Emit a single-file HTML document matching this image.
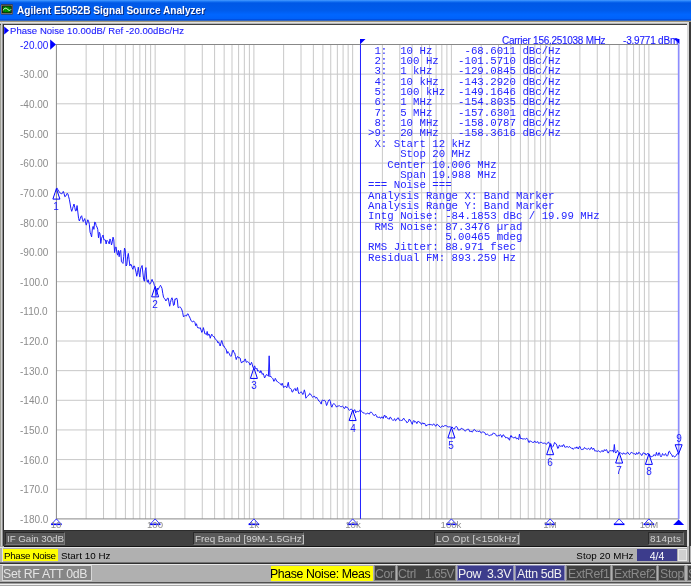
<!DOCTYPE html>
<html><head><meta charset="utf-8"><style>
*{margin:0;padding:0}
html,body{width:691px;height:586px;overflow:hidden;background:#a0a098}
body{position:relative;font-family:"Liberation Sans",sans-serif}
.a{position:absolute;white-space:pre;will-change:transform}
.mono{font-family:"Liberation Mono",monospace;font-size:10.72px;line-height:10px;color:#2424ff}
</style></head><body>
<svg class="a" style="left:0;top:0" width="691" height="586" viewBox="0 0 691 586">
<defs>
<linearGradient id="tb" x1="0" y1="0" x2="0" y2="21" gradientUnits="userSpaceOnUse">
<stop offset="0" stop-color="#4a9cff"/>
<stop offset="0.06" stop-color="#1f7cf8"/>
<stop offset="0.14" stop-color="#0058e6"/>
<stop offset="0.5" stop-color="#005cec"/>
<stop offset="0.7" stop-color="#0066ff"/>
<stop offset="0.88" stop-color="#0062fa"/>
<stop offset="0.93" stop-color="#0050e0"/>
<stop offset="1" stop-color="#4a70b0"/>
</linearGradient>
</defs>
<rect x="0" y="0" width="691" height="21" fill="url(#tb)"/>
<rect x="0" y="21" width="691" height="1" fill="#a09880"/>
<rect x="0" y="22" width="691" height="1" fill="#e0e0e0"/>
<rect x="0" y="23" width="691" height="1" fill="#b8b8b8"/>
<rect x="0" y="24" width="688" height="1" fill="#404040"/>
<rect x="1" y="22" width="1" height="524" fill="#d0d0d0"/>
<rect x="2" y="24" width="1" height="522" fill="#909090"/>
<rect x="3" y="24" width="1" height="522" fill="#303030"/>
<rect x="4" y="25" width="683" height="505" fill="#ffffff"/>
<rect x="687" y="22" width="2" height="524" fill="#d8d8d8"/>
<rect x="689" y="22" width="2" height="524" fill="#3a3a3a"/>
<!-- icon -->
<rect x="0.9" y="4.3" width="12" height="10.3" rx="1" fill="#1e1a16"/>
<rect x="1.75" y="5.15" width="10.3" height="8.6" fill="none" stroke="#a8a098" stroke-width="0.7"/>
<rect x="2.5" y="5.9" width="8.8" height="7.1" fill="#0c0c0c"/>
<rect x="3.1" y="6.5" width="7.6" height="5.9" fill="#00a000"/>
<path d="M4.5 6.6V12.4M7 6.6V12.4M9.5 6.6V12.4M3 7.2H10.8M3 12.1H10.8" stroke="#003a00" stroke-width="0.6" stroke-dasharray="0.8 0.8"/>
<path d="M3.2 10.3C4.3 7.6 6.8 7.6 8.2 9.9C8.9 10.6 10.2 10.6 11 9.4" fill="none" stroke="#e8ffe0" stroke-width="1"/>
<!-- grid -->
<path d="M86.13 44.50V518.90M103.52 44.50V518.90M115.85 44.50V518.90M125.42 44.50V518.90M133.24 44.50V518.90M139.85 44.50V518.90M145.58 44.50V518.90M150.63 44.50V518.90M155.15 44.50V518.90M184.88 44.50V518.90M202.27 44.50V518.90M214.60 44.50V518.90M224.17 44.50V518.90M231.99 44.50V518.90M238.60 44.50V518.90M244.33 44.50V518.90M249.38 44.50V518.90M253.90 44.50V518.90M283.63 44.50V518.90M301.02 44.50V518.90M313.35 44.50V518.90M322.92 44.50V518.90M330.74 44.50V518.90M337.35 44.50V518.90M343.08 44.50V518.90M348.13 44.50V518.90M352.65 44.50V518.90M382.38 44.50V518.90M399.77 44.50V518.90M412.10 44.50V518.90M421.67 44.50V518.90M429.49 44.50V518.90M436.10 44.50V518.90M441.83 44.50V518.90M446.88 44.50V518.90M451.40 44.50V518.90M481.13 44.50V518.90M498.52 44.50V518.90M510.85 44.50V518.90M520.42 44.50V518.90M528.24 44.50V518.90M534.85 44.50V518.90M540.58 44.50V518.90M545.63 44.50V518.90M550.15 44.50V518.90M579.88 44.50V518.90M597.27 44.50V518.90M609.60 44.50V518.90M619.17 44.50V518.90M626.99 44.50V518.90M633.60 44.50V518.90M639.33 44.50V518.90M644.38 44.50V518.90M648.90 44.50V518.90M56.40 74.15H678.63M56.40 103.80H678.63M56.40 133.45H678.63M56.40 163.10H678.63M56.40 192.75H678.63M56.40 222.40H678.63M56.40 252.05H678.63M56.40 281.70H678.63M56.40 311.35H678.63M56.40 341.00H678.63M56.40 370.65H678.63M56.40 400.30H678.63M56.40 429.95H678.63M56.40 459.60H678.63M56.40 489.25H678.63" stroke="#c8c8c8" stroke-width="1" fill="none"/>
<rect x="56.40" y="44.50" width="622.23" height="474.40" fill="none" stroke="#888888" stroke-width="1"/>
<!-- band marker lines -->
<path d="M360.47 44.50V518.90" stroke="#2020ff" stroke-width="1"/>
<path d="M678.63 43.50V518.90" stroke="#8c8cff" stroke-width="1.6"/>
<path d="M359.97 39H365.47L359.97 44.5Z" fill="#0000ff"/>
<path d="M673.63 38.5L679.43 39V44Z" fill="#0000ff"/>
<!-- trace -->
<path d="M56.40 188.60L57.17 188.17L57.93 189.85L58.70 191.04L59.46 192.19L60.23 193.11L60.99 193.50L61.76 193.88L62.52 192.95L63.29 191.42L64.05 193.40L64.82 196.71L65.58 196.33L66.35 194.80L67.11 193.27L67.88 193.93L68.65 196.80L69.41 199.67L70.18 204.06L70.94 208.65L71.71 211.34L72.47 208.89L73.24 206.44L74.00 204.01L74.77 207.46L75.53 210.90L76.30 210.61L77.06 205.55L77.83 212.05L78.60 218.56L79.36 220.99L80.13 218.85L80.89 216.70L81.66 215.73L82.42 219.30L83.19 221.63L83.95 220.10L84.72 218.56L85.48 221.87L86.25 225.13L87.01 222.45L87.78 219.77L88.54 221.18L89.31 224.24L90.08 232.20L90.84 234.40L91.61 236.96L92.37 228.77L93.14 226.37L93.90 229.39L94.67 222.14L95.43 222.48L96.20 225.67L96.96 227.00L97.73 229.27L98.49 237.77L99.26 232.25L100.02 233.82L100.79 243.49L101.56 238.24L102.32 236.59L103.09 235.06L103.85 239.76L104.62 239.79L105.38 240.03L106.15 244.03L106.91 240.32L107.68 241.14L108.44 241.76L109.21 243.97L109.97 238.94L110.74 240.78L111.50 245.01L112.27 241.88L113.04 237.17L113.80 239.90L114.57 252.59L115.33 247.33L116.10 247.01L116.86 252.72L117.63 255.13L118.39 250.37L119.16 256.72L119.92 251.47L120.69 250.40L121.45 261.76L122.22 262.47L122.99 263.42L123.75 256.43L124.52 248.05L125.28 250.38L126.05 266.00L126.81 265.02L127.58 256.77L128.34 253.38L129.11 259.76L129.87 265.85L130.64 264.11L131.40 264.94L132.17 267.68L132.93 269.32L133.70 266.04L134.47 266.06L135.23 268.76L136.00 272.05L136.76 276.23L137.53 272.69L138.29 267.19L139.06 273.03L139.82 276.92L140.59 269.14L141.35 267.26L142.12 265.49L142.88 272.94L143.65 279.66L144.41 281.24L145.18 270.84L145.95 267.59L146.71 279.46L147.48 282.19L148.24 279.75L149.01 283.51L149.77 283.96L150.54 283.58L151.30 281.29L152.07 279.37L152.83 281.78L153.60 282.16L154.36 285.66L155.13 286.36L155.90 295.74L156.66 294.27L157.43 288.03L158.19 289.58L158.96 287.92L159.72 286.56L160.49 285.29L161.25 286.63L162.02 288.51L162.78 293.38L163.55 297.29L164.31 298.46L165.08 299.10L165.84 300.97L166.61 299.99L167.38 298.25L168.14 298.02L168.91 301.90L169.67 306.24L170.44 302.49L171.20 299.48L171.97 297.78L172.73 300.44L173.50 305.48L174.26 304.90L175.03 298.74L175.79 299.45L176.56 297.96L177.32 299.68L178.09 307.60L178.86 307.60L179.62 306.85L180.39 307.23L181.15 308.23L181.92 309.96L182.68 312.64L183.45 316.81L184.21 315.86L184.98 316.12L185.74 315.48L186.51 316.01L187.27 314.12L188.04 313.78L188.80 315.66L189.57 316.99L190.34 318.74L191.10 320.78L191.87 321.47L192.63 321.99L193.40 321.00L194.16 321.40L194.93 322.56L195.69 325.68L196.46 323.77L197.22 326.65L197.99 328.13L198.75 327.73L199.52 328.13L200.29 327.71L201.05 330.11L201.82 332.39L202.58 331.18L203.35 327.62L204.11 330.45L204.88 333.90L205.64 333.95L206.41 334.70L207.17 331.46L207.94 335.51L208.70 334.09L209.47 334.56L210.23 338.25L211.00 335.97L211.77 334.19L212.53 335.62L213.30 336.58L214.06 336.44L214.83 338.14L215.59 339.27L216.36 340.21L217.12 340.66L217.89 342.84L218.65 341.82L219.42 344.33L220.18 346.03L220.95 343.13L221.71 340.52L222.48 342.74L223.25 346.02L224.01 345.94L224.78 347.82L225.54 348.38L226.31 349.92L227.07 353.46L227.84 351.47L228.60 352.58L229.37 353.80L230.13 355.68L230.90 356.45L231.66 354.80L232.43 351.11L233.20 350.05L233.96 352.59L234.73 352.98L235.49 356.40L236.26 359.57L237.02 357.14L237.79 356.43L238.55 357.95L239.32 357.54L240.08 358.02L240.85 361.34L241.61 363.06L242.38 361.71L243.14 361.56L243.91 361.55L244.68 359.40L245.44 359.13L246.21 362.27L246.97 361.97L247.74 361.58L248.50 362.16L249.27 363.04L250.03 365.13L250.80 363.84L251.56 362.29L252.33 364.87L253.09 367.66L253.86 367.94L254.62 365.82L255.39 367.88L256.16 369.20L256.92 368.28L257.69 371.15L258.45 370.59L259.22 371.57L259.98 372.90L260.75 370.62L261.51 371.98L262.28 374.36L263.04 373.36L263.81 375.28L264.57 377.94L265.34 376.76L266.10 374.89L266.87 374.51L267.64 375.55L268.40 376.20L269.17 355.82L269.93 376.95L270.70 376.13L271.46 377.36L272.23 377.97L272.99 378.76L273.76 381.32L274.52 380.89L275.29 378.33L276.05 379.74L276.82 381.38L277.59 381.58L278.35 382.53L279.12 382.68L279.88 383.65L280.65 384.04L281.41 385.29L282.18 383.18L282.94 385.41L283.71 387.63L284.47 386.59L285.24 386.26L286.00 386.58L286.77 387.86L287.53 385.01L288.30 382.30L289.07 387.50L289.83 388.20L290.60 388.48L291.36 389.39L292.13 392.10L292.89 391.68L293.66 389.61L294.42 389.10L295.19 388.39L295.95 390.88L296.72 389.76L297.48 387.51L298.25 391.87L299.01 393.72L299.78 392.88L300.55 392.37L301.31 391.77L302.08 393.10L302.84 394.54L303.61 392.76L304.37 389.85L305.14 392.84L305.90 398.22L306.67 397.05L307.43 396.45L308.20 395.38L308.96 395.11L309.73 393.33L310.50 394.06L311.26 395.19L312.03 396.57L312.79 397.32L313.56 396.76L314.32 395.91L315.09 397.20L315.85 398.30L316.62 397.26L317.38 398.40L318.15 399.84L318.91 401.10L319.68 401.41L320.44 402.63L321.21 404.11L321.98 400.45L322.74 399.98L323.51 400.92L324.27 400.13L325.04 400.67L325.80 402.53L326.57 405.57L327.33 403.79L328.10 401.59L328.86 400.01L329.63 399.68L330.39 401.49L331.16 405.72L331.92 407.22L332.69 404.56L333.46 403.91L334.22 403.65L334.99 404.74L335.75 405.73L336.52 407.17L337.28 406.03L338.05 406.24L338.81 405.79L339.58 405.79L340.34 406.51L341.11 406.57L341.87 406.70L342.64 406.20L343.40 406.86L344.17 408.50L344.94 408.23L345.70 406.34L346.47 407.42L347.23 407.29L348.00 408.18L348.76 409.87L349.53 410.34L350.29 409.50L351.06 409.04L351.82 409.51L352.59 410.06L353.35 411.50L354.12 410.14L354.89 409.68L355.65 412.82L356.42 411.63L357.18 411.48L357.95 411.27L358.71 411.83L359.48 410.88L360.24 409.78L361.01 410.90L361.77 411.49L362.54 412.15L363.30 413.16L364.07 412.55L364.83 413.34L365.60 414.21L366.37 413.79L367.13 413.49L367.90 412.90L368.66 413.81L369.43 414.08L370.19 412.31L370.96 412.15L371.72 412.43L372.49 413.52L373.25 414.89L374.02 415.62L374.78 415.27L375.55 414.29L376.31 415.55L377.08 417.29L377.85 416.93L378.61 417.50L379.38 416.89L380.14 418.02L380.91 418.23L381.67 416.92L382.44 417.36L383.20 418.46L383.97 415.96L384.73 414.99L385.50 417.46L386.26 416.21L387.03 417.85L387.80 418.59L388.56 418.78L389.33 419.19L390.09 417.06L390.86 417.54L391.62 419.17L392.39 419.70L393.15 420.59L393.92 419.43L394.68 418.71L395.45 420.80L396.21 420.29L396.98 419.00L397.74 417.84L398.51 417.98L399.28 420.06L400.04 420.72L400.81 419.96L401.57 420.52L402.34 420.38L403.10 418.79L403.87 418.28L404.63 419.87L405.40 420.72L406.16 421.06L406.93 422.86L407.69 422.23L408.46 421.58L409.22 419.01L409.99 419.88L410.76 421.31L411.52 422.79L412.29 424.32L413.05 421.55L413.82 420.41L414.58 422.17L415.35 421.62L416.11 421.99L416.88 423.58L417.64 421.76L418.41 420.97L419.17 422.20L419.94 422.70L420.70 422.83L421.47 424.47L422.24 423.38L423.00 422.73L423.77 424.09L424.53 423.18L425.30 424.52L426.06 426.11L426.83 425.07L427.59 424.95L428.36 424.55L429.12 424.98L429.89 423.95L430.65 424.74L431.42 424.66L432.19 425.26L432.95 424.91L433.72 423.75L434.48 424.53L435.25 425.83L436.01 426.19L436.78 424.35L437.54 424.44L438.31 425.53L439.07 425.84L439.84 427.00L440.60 427.44L441.37 426.98L442.13 425.91L442.90 426.03L443.67 426.68L444.43 425.69L445.20 425.48L445.96 425.89L446.73 425.80L447.49 426.84L448.26 427.03L449.02 426.69L449.79 426.84L450.55 426.98L451.32 427.47L452.08 426.86L452.85 428.03L453.61 428.64L454.38 429.08L455.15 427.52L455.91 426.45L456.68 426.63L457.44 427.79L458.21 429.98L458.97 430.03L459.74 429.76L460.50 429.58L461.27 428.21L462.03 428.64L462.80 429.09L463.56 429.25L464.33 430.56L465.10 431.08L465.86 430.74L466.63 429.61L467.39 429.38L468.16 429.18L468.92 429.52L469.69 431.53L470.45 431.45L471.22 431.13L471.98 432.19L472.75 431.53L473.51 429.92L474.28 429.49L475.04 429.94L475.81 431.13L476.58 431.42L477.34 430.87L478.11 431.73L478.87 431.34L479.64 430.85L480.40 432.34L481.17 433.03L481.93 432.49L482.70 431.89L483.46 432.04L484.23 432.39L484.99 432.92L485.76 434.72L486.52 434.51L487.29 433.79L488.06 434.75L488.82 435.57L489.59 435.61L490.35 435.20L491.12 434.81L491.88 435.10L492.65 433.86L493.41 432.80L494.18 433.76L494.94 433.44L495.71 434.49L496.47 435.98L497.24 435.97L498.00 435.96L498.77 435.28L499.54 435.89L500.30 434.53L501.07 435.40L501.83 437.33L502.60 435.40L503.36 434.67L504.13 436.20L504.89 436.28L505.66 437.83L506.42 437.51L507.19 438.13L507.95 437.56L508.72 439.42L509.49 440.11L510.25 437.08L511.02 435.40L511.78 437.20L512.55 437.13L513.31 437.64L514.08 438.11L514.84 437.19L515.61 436.97L516.37 438.92L517.14 438.34L517.90 438.68L518.67 439.60L519.43 434.10L520.20 437.11L520.97 439.03L521.73 438.08L522.50 439.02L523.26 439.37L524.03 438.41L524.79 439.20L525.56 439.27L526.32 438.33L527.09 438.43L527.85 439.73L528.62 442.19L529.38 442.36L530.15 440.66L530.91 441.54L531.68 441.69L532.45 442.36L533.21 442.38L533.98 442.35L534.74 440.92L535.51 442.35L536.27 442.49L537.04 441.96L537.80 441.62L538.57 443.35L539.33 443.05L540.10 442.67L540.86 442.18L541.63 442.42L542.40 443.22L543.16 443.16L543.93 443.38L544.69 443.07L545.46 443.64L546.22 444.26L546.99 443.83L547.75 442.79L548.52 441.86L549.28 443.71L550.05 444.19L550.81 443.46L551.58 446.43L552.34 447.17L553.11 446.32L553.88 444.43L554.64 442.43L555.41 443.42L556.17 443.85L556.94 445.78L557.70 448.44L558.47 448.06L559.23 445.20L560.00 445.52L560.76 446.55L561.53 445.67L562.29 446.71L563.06 444.99L563.82 444.65L564.59 446.91L565.36 447.44L566.12 446.40L566.89 447.13L567.65 446.63L568.42 447.46L569.18 446.51L569.95 446.84L570.71 447.85L571.48 448.22L572.24 448.06L573.01 449.37L573.77 448.62L574.54 447.97L575.30 447.69L576.07 448.37L576.84 446.84L577.60 448.25L578.37 449.02L579.13 446.78L579.90 446.38L580.66 448.48L581.43 449.61L582.19 449.27L582.96 449.65L583.72 448.98L584.49 447.46L585.25 448.19L586.02 448.86L586.79 448.98L587.55 449.11L588.32 448.42L589.08 448.59L589.85 449.79L590.61 449.04L591.38 447.28L592.14 448.83L592.91 449.46L593.67 448.16L594.44 449.96L595.20 451.29L595.97 450.47L596.73 451.44L597.50 451.37L598.27 450.61L599.03 451.10L599.80 451.93L600.56 452.03L601.33 451.47L602.09 450.38L602.86 451.77L603.62 451.44L604.39 449.63L605.15 450.80L605.92 449.68L606.68 449.74L607.45 451.87L608.21 453.14L608.98 451.59L609.75 450.65L610.51 450.64L611.28 451.15L612.04 450.26L612.81 450.58L613.57 452.31L614.34 444.48L615.10 451.80L615.87 453.01L616.63 452.28L617.40 450.19L618.16 451.41L618.93 452.57L619.70 453.21L620.46 452.84L621.23 453.12L621.99 453.89L622.76 454.25L623.52 452.76L624.29 453.72L625.05 453.88L625.82 454.01L626.58 453.74L627.35 452.34L628.11 452.62L628.88 454.06L629.64 454.61L630.41 453.69L631.18 452.27L631.94 452.67L632.71 453.10L633.47 453.69L634.24 453.68L635.00 453.92L635.77 454.79L636.53 452.62L637.30 453.97L638.06 453.94L638.83 452.16L639.59 452.80L640.36 453.69L641.12 454.86L641.89 455.57L642.66 453.61L643.42 452.63L644.19 453.79L644.95 452.99L645.72 454.84L646.48 454.90L647.25 453.55L648.01 453.42L648.78 453.90L649.54 454.91L650.31 456.14L651.07 456.98L651.84 456.52L652.60 456.28L653.37 456.00L654.14 454.53L654.90 455.52L655.67 455.73L656.43 452.37L657.20 454.68L657.96 455.51L658.73 452.82L659.49 452.86L660.26 455.74L661.02 456.86L661.79 455.63L662.55 453.53L663.32 454.61L664.09 455.47L664.85 454.29L665.62 453.57L666.38 455.77L667.15 456.02L667.91 455.42L668.68 451.76L669.44 451.13L670.21 452.75L670.97 454.09L671.74 454.69L672.50 456.74L673.27 455.66L674.03 456.66L674.80 457.06L675.57 456.19L676.33 455.16L677.10 453.87L677.86 453.54L678.63 454.74" stroke="#1a1aff" stroke-width="1" fill="none" stroke-linejoin="round"/>
<path d="M56.40 188.60L52.90 199.10H59.90Z" fill="none" stroke="#0000ff" stroke-width="1"/><path d="M56.40 518.90L51.60 524.10M56.40 518.90L61.20 524.10" fill="none" stroke="#2020ff" stroke-width="0.9"/><path d="M51.10 524.30H61.70" stroke="#0000ff" stroke-width="1.6"/><path d="M155.15 286.36L151.65 296.86H158.65Z" fill="none" stroke="#0000ff" stroke-width="1"/><path d="M155.15 518.90L150.35 524.10M155.15 518.90L159.95 524.10" fill="none" stroke="#2020ff" stroke-width="0.9"/><path d="M149.85 524.30H160.45" stroke="#0000ff" stroke-width="1.6"/><path d="M253.90 367.94L250.40 378.44H257.40Z" fill="none" stroke="#0000ff" stroke-width="1"/><path d="M253.90 518.90L249.10 524.10M253.90 518.90L258.70 524.10" fill="none" stroke="#2020ff" stroke-width="0.9"/><path d="M248.60 524.30H259.20" stroke="#0000ff" stroke-width="1.6"/><path d="M352.65 410.06L349.15 420.56H356.15Z" fill="none" stroke="#0000ff" stroke-width="1"/><path d="M352.65 518.90L347.85 524.10M352.65 518.90L357.45 524.10" fill="none" stroke="#2020ff" stroke-width="0.9"/><path d="M347.35 524.30H357.95" stroke="#0000ff" stroke-width="1.6"/><path d="M451.40 427.47L447.90 437.97H454.90Z" fill="none" stroke="#0000ff" stroke-width="1"/><path d="M451.40 518.90L446.60 524.10M451.40 518.90L456.20 524.10" fill="none" stroke="#2020ff" stroke-width="0.9"/><path d="M446.10 524.30H456.70" stroke="#0000ff" stroke-width="1.6"/><path d="M550.15 444.19L546.65 454.69H553.65Z" fill="none" stroke="#0000ff" stroke-width="1"/><path d="M550.15 518.90L545.35 524.10M550.15 518.90L554.95 524.10" fill="none" stroke="#2020ff" stroke-width="0.9"/><path d="M544.85 524.30H555.45" stroke="#0000ff" stroke-width="1.6"/><path d="M619.17 452.57L615.67 463.07H622.67Z" fill="none" stroke="#0000ff" stroke-width="1"/><path d="M619.17 518.90L614.37 524.10M619.17 518.90L623.97 524.10" fill="none" stroke="#2020ff" stroke-width="0.9"/><path d="M613.87 524.30H624.47" stroke="#0000ff" stroke-width="1.6"/><path d="M648.90 453.90L645.40 464.40H652.40Z" fill="none" stroke="#0000ff" stroke-width="1"/><path d="M648.90 518.90L644.10 524.10M648.90 518.90L653.70 524.10" fill="none" stroke="#2020ff" stroke-width="0.9"/><path d="M643.60 524.30H654.20" stroke="#0000ff" stroke-width="1.6"/><path d="M678.63 453.74L675.13 444.74H682.13Z" fill="none" stroke="#0000ff" stroke-width="1"/><path d="M678.63 519.40L673.13 524.90H684.13Z" fill="#0000ff"/>
<path d="M50.2 39.6L56 44.5L50.2 49.7Z" fill="#0000ff"/>
<path d="M4.2 26.4L9 30.5L4.2 34.6Z" fill="#0000ff"/>
</svg>
<div class="a" style="left:16.50px;top:4.00px;font:bold 10.1px/13px 'Liberation Sans';color:#fff;letter-spacing:0px;text-shadow:1px 1px 0 #0a2a80">Agilent E5052B Signal Source Analyzer</div><div class="a" style="left:10.00px;top:24.71px;font:normal 9.5px/12px 'Liberation Sans';color:#1a1aff;letter-spacing:0.05px;-webkit-text-stroke:0.12px #1a1aff">Phase Noise 10.00dB/ Ref -20.00dBc/Hz</div><div class="a" style="left:501.50px;top:35.03px;font:normal 10px/12px 'Liberation Sans';color:#1a1aff;letter-spacing:-0.28px;-webkit-text-stroke:0.12px #1a1aff">Carrier 156.251038 MHz</div><div class="a" style="left:623.00px;top:35.03px;font:normal 10px/12px 'Liberation Sans';color:#1a1aff;letter-spacing:-0.2px;-webkit-text-stroke:0.12px #1a1aff">-3.9771 dBm</div><div class="a" style="right:643.00px;text-align:right;top:39.64px;font:normal 10px/12px 'Liberation Sans';color:#1a1aff;letter-spacing:0px;">-20.00</div><div class="a" style="right:643.00px;text-align:right;top:69.28px;font:normal 10px/12px 'Liberation Sans';color:#8c8c8c;letter-spacing:0px;">-30.00</div><div class="a" style="right:643.00px;text-align:right;top:98.93px;font:normal 10px/12px 'Liberation Sans';color:#8c8c8c;letter-spacing:0px;">-40.00</div><div class="a" style="right:643.00px;text-align:right;top:128.58px;font:normal 10px/12px 'Liberation Sans';color:#8c8c8c;letter-spacing:0px;">-50.00</div><div class="a" style="right:643.00px;text-align:right;top:158.23px;font:normal 10px/12px 'Liberation Sans';color:#8c8c8c;letter-spacing:0px;">-60.00</div><div class="a" style="right:643.00px;text-align:right;top:187.88px;font:normal 10px/12px 'Liberation Sans';color:#8c8c8c;letter-spacing:0px;">-70.00</div><div class="a" style="right:643.00px;text-align:right;top:217.53px;font:normal 10px/12px 'Liberation Sans';color:#8c8c8c;letter-spacing:0px;">-80.00</div><div class="a" style="right:643.00px;text-align:right;top:247.19px;font:normal 10px/12px 'Liberation Sans';color:#8c8c8c;letter-spacing:0px;">-90.00</div><div class="a" style="right:643.00px;text-align:right;top:276.84px;font:normal 10px/12px 'Liberation Sans';color:#8c8c8c;letter-spacing:0px;">-100.0</div><div class="a" style="right:643.00px;text-align:right;top:306.49px;font:normal 10px/12px 'Liberation Sans';color:#8c8c8c;letter-spacing:0px;">-110.0</div><div class="a" style="right:643.00px;text-align:right;top:336.14px;font:normal 10px/12px 'Liberation Sans';color:#8c8c8c;letter-spacing:0px;">-120.0</div><div class="a" style="right:643.00px;text-align:right;top:365.79px;font:normal 10px/12px 'Liberation Sans';color:#8c8c8c;letter-spacing:0px;">-130.0</div><div class="a" style="right:643.00px;text-align:right;top:395.44px;font:normal 10px/12px 'Liberation Sans';color:#8c8c8c;letter-spacing:0px;">-140.0</div><div class="a" style="right:643.00px;text-align:right;top:425.09px;font:normal 10px/12px 'Liberation Sans';color:#8c8c8c;letter-spacing:0px;">-150.0</div><div class="a" style="right:643.00px;text-align:right;top:454.74px;font:normal 10px/12px 'Liberation Sans';color:#8c8c8c;letter-spacing:0px;">-160.0</div><div class="a" style="right:643.00px;text-align:right;top:484.39px;font:normal 10px/12px 'Liberation Sans';color:#8c8c8c;letter-spacing:0px;">-170.0</div><div class="a" style="right:643.00px;text-align:right;top:514.03px;font:normal 10px/12px 'Liberation Sans';color:#8c8c8c;letter-spacing:0px;">-180.0</div><div class="a" style="left:26.40px;width:60px;text-align:center;top:519.47px;font:normal 9.6px/12px 'Liberation Sans';color:#8c8c8c;letter-spacing:0px;">10</div><div class="a" style="left:125.15px;width:60px;text-align:center;top:519.47px;font:normal 9.6px/12px 'Liberation Sans';color:#8c8c8c;letter-spacing:0px;">100</div><div class="a" style="left:223.90px;width:60px;text-align:center;top:519.47px;font:normal 9.6px/12px 'Liberation Sans';color:#8c8c8c;letter-spacing:0px;">1k</div><div class="a" style="left:322.65px;width:60px;text-align:center;top:519.47px;font:normal 9.6px/12px 'Liberation Sans';color:#8c8c8c;letter-spacing:0px;">10k</div><div class="a" style="left:421.40px;width:60px;text-align:center;top:519.47px;font:normal 9.6px/12px 'Liberation Sans';color:#8c8c8c;letter-spacing:0px;">100k</div><div class="a" style="left:520.15px;width:60px;text-align:center;top:519.47px;font:normal 9.6px/12px 'Liberation Sans';color:#8c8c8c;letter-spacing:0px;">1M</div><div class="a" style="left:618.90px;width:60px;text-align:center;top:519.47px;font:normal 9.6px/12px 'Liberation Sans';color:#8c8c8c;letter-spacing:0px;">10M</div><div class="a" style="left:46.40px;width:20px;text-align:center;top:201.14px;font:normal 10px/12px 'Liberation Sans';color:#1a1aff;letter-spacing:0px;">1</div><div class="a" style="left:145.15px;width:20px;text-align:center;top:298.89px;font:normal 10px/12px 'Liberation Sans';color:#1a1aff;letter-spacing:0px;">2</div><div class="a" style="left:243.90px;width:20px;text-align:center;top:380.47px;font:normal 10px/12px 'Liberation Sans';color:#1a1aff;letter-spacing:0px;">3</div><div class="a" style="left:342.65px;width:20px;text-align:center;top:422.60px;font:normal 10px/12px 'Liberation Sans';color:#1a1aff;letter-spacing:0px;">4</div><div class="a" style="left:441.40px;width:20px;text-align:center;top:440.01px;font:normal 10px/12px 'Liberation Sans';color:#1a1aff;letter-spacing:0px;">5</div><div class="a" style="left:540.15px;width:20px;text-align:center;top:456.73px;font:normal 10px/12px 'Liberation Sans';color:#1a1aff;letter-spacing:0px;">6</div><div class="a" style="left:609.17px;width:20px;text-align:center;top:465.11px;font:normal 10px/12px 'Liberation Sans';color:#1a1aff;letter-spacing:0px;">7</div><div class="a" style="left:638.90px;width:20px;text-align:center;top:466.44px;font:normal 10px/12px 'Liberation Sans';color:#1a1aff;letter-spacing:0px;">8</div><div class="a" style="left:668.63px;width:20px;text-align:center;top:432.78px;font:normal 10px/12px 'Liberation Sans';color:#1a1aff;letter-spacing:0px;">9</div><div class="a mono" style="left:367.8px;top:45.60px"> 1:  10 Hz     -68.6011 dBc/Hz</div><div class="a mono" style="left:367.8px;top:55.96px"> 2:  100 Hz   -101.5710 dBc/Hz</div><div class="a mono" style="left:367.8px;top:66.32px"> 3:  1 kHz    -129.0845 dBc/Hz</div><div class="a mono" style="left:367.8px;top:76.68px"> 4:  10 kHz   -143.2920 dBc/Hz</div><div class="a mono" style="left:367.8px;top:87.04px"> 5:  100 kHz  -149.1646 dBc/Hz</div><div class="a mono" style="left:367.8px;top:97.40px"> 6:  1 MHz    -154.8035 dBc/Hz</div><div class="a mono" style="left:367.8px;top:107.76px"> 7:  5 MHz    -157.6301 dBc/Hz</div><div class="a mono" style="left:367.8px;top:118.12px"> 8:  10 MHz   -158.0787 dBc/Hz</div><div class="a mono" style="left:367.8px;top:128.48px">>9:  20 MHz   -158.3616 dBc/Hz</div><div class="a mono" style="left:367.8px;top:138.84px"> X: Start 12 kHz</div><div class="a mono" style="left:367.8px;top:149.20px">     Stop 20 MHz</div><div class="a mono" style="left:367.8px;top:159.56px">   Center 10.006 MHz</div><div class="a mono" style="left:367.8px;top:169.92px">     Span 19.988 MHz</div><div class="a mono" style="left:367.8px;top:180.28px">=== Noise ===</div><div class="a mono" style="left:367.8px;top:190.64px">Analysis Range X: Band Marker</div><div class="a mono" style="left:367.8px;top:201.00px">Analysis Range Y: Band Marker</div><div class="a mono" style="left:367.8px;top:211.36px">Intg Noise: -84.1853 dBc / 19.99 MHz</div><div class="a mono" style="left:367.8px;top:221.72px"> RMS Noise: 87.3476 µrad</div><div class="a mono" style="left:367.8px;top:232.08px">            5.00465 mdeg</div><div class="a mono" style="left:367.8px;top:242.44px">RMS Jitter: 88.971 fsec</div><div class="a mono" style="left:367.8px;top:252.80px">Residual FM: 893.259 Hz</div><div class="a" style="left:4px;top:530px;width:683px;height:16px;background:#404040;"></div><div class="a" style="left:4px;top:530px;width:683px;height:1px;background:#2c2c2c;"></div><div class="a" style="left:5px;top:532px;width:60px;height:13px;background:#5a5a5a;box-sizing:border-box;border:1px solid #6e6e6e"></div><div class="a" style="left:5px;top:532px;width:60px;height:13px;box-sizing:border-box;border:1px solid #2a2a2a;border-right-color:#777;border-bottom-color:#777"></div><div class="a" style="left:7px;top:533.0px;font:9.8px/11.76px 'Liberation Sans';color:#d4d4d4;letter-spacing:-0.07px;">IF Gain 30dB</div><div class="a" style="left:193px;top:532px;width:111px;height:13px;background:#5a5a5a;box-sizing:border-box;border:1px solid #6e6e6e"></div><div class="a" style="left:193px;top:532px;width:111px;height:13px;box-sizing:border-box;border:1px solid #2a2a2a;border-right-color:#777;border-bottom-color:#777"></div><div class="a" style="left:195px;top:533.0px;font:9.8px/11.76px 'Liberation Sans';color:#d4d4d4;letter-spacing:0.0px;">Freq Band [99M-1.5GHz]</div><div class="a" style="left:434px;top:532px;width:86px;height:13px;background:#5a5a5a;box-sizing:border-box;border:1px solid #6e6e6e"></div><div class="a" style="left:434px;top:532px;width:86px;height:13px;box-sizing:border-box;border:1px solid #2a2a2a;border-right-color:#777;border-bottom-color:#777"></div><div class="a" style="left:435.5px;top:533.0px;font:9.8px/11.76px 'Liberation Sans';color:#d4d4d4;letter-spacing:0.32px;">LO Opt [&lt;150kHz]</div><div class="a" style="left:648px;top:532px;width:36px;height:13px;background:#5a5a5a;box-sizing:border-box;border:1px solid #6e6e6e"></div><div class="a" style="left:648px;top:532px;width:36px;height:13px;box-sizing:border-box;border:1px solid #2a2a2a;border-right-color:#777;border-bottom-color:#777"></div><div class="a" style="left:650px;top:533.0px;font:9.8px/11.76px 'Liberation Sans';color:#d4d4d4;letter-spacing:0.3px;">814pts</div><div class="a" style="left:0px;top:546px;width:691px;height:17px;background:#b0b0b0;"></div><div class="a" style="left:4px;top:546px;width:683px;height:1px;background:#141414;"></div><div class="a" style="left:0px;top:547px;width:687px;height:1px;background:#e4e4e4;"></div><div class="a" style="left:0px;top:562px;width:691px;height:1px;background:#707070;"></div><div class="a" style="left:2px;top:547px;width:1px;height:15px;background:#e0e0e0;"></div><div class="a" style="left:689px;top:546px;width:1px;height:17px;background:#505050;"></div><div class="a" style="left:3px;top:549px;width:55px;height:12px;background:#ffff00;"></div><div class="a" style="left:3.6px;top:549.6px;font:9.8px/11.76px 'Liberation Sans';color:#000;letter-spacing:-0.35px;">Phase Noise</div><div class="a" style="left:60.5px;top:549.6px;font:9.8px/11.76px 'Liberation Sans';color:#000;letter-spacing:0.05px;">Start 10 Hz</div><div class="a" style="left:540px;top:549.6px;width:93.5px;text-align:right;font:9.8px/11.76px 'Liberation Sans';color:#000;letter-spacing:0.05px">Stop 20 MHz</div><div class="a" style="left:637px;top:549px;width:40px;height:12px;background:#3c3c8c;"></div><div class="a" style="left:637px;top:549.6px;width:40px;text-align:center;font:10.5px/12.6px 'Liberation Sans';color:#fff">4/4</div><div class="a" style="left:678px;top:549px;width:9px;height:12px;background:#d0d0d0;box-sizing:border-box;border:1px solid #e8e8e8"></div><div class="a" style="left:0px;top:563px;width:691px;height:1px;background:#303030;"></div><div class="a" style="left:0px;top:564px;width:691px;height:22px;background:#b0b0b0;"></div><div class="a" style="left:0px;top:564px;width:691px;height:1px;background:#e8e8e8;"></div><div class="a" style="left:0px;top:582px;width:691px;height:1px;background:#505050;"></div><div class="a" style="left:0px;top:583px;width:691px;height:1px;background:#a0a0a0;"></div><div class="a" style="left:0px;top:584px;width:691px;height:1px;background:#f0f0f0;"></div><div class="a" style="left:0px;top:585px;width:691px;height:1px;background:#a8a8a8;"></div><div class="a" style="left:1.5px;top:565px;width:90.0px;height:16px;background:#868686;box-sizing:border-box;border:1px solid #d8d8d8"></div><div class="a" style="left:3.4px;top:567.2px;font:12.3px/14.76px 'Liberation Sans';color:#e4e4e4;letter-spacing:-0.3px;">Set RF ATT 0dB</div><div class="a" style="left:271px;top:566px;width:102px;height:15px;background:#ffff00;"></div><div class="a" style="left:270.4px;top:567.2px;font:12.3px/14.76px 'Liberation Sans';color:#000;letter-spacing:-0.37px;">Phase Noise: Meas</div><div class="a" style="left:374px;top:565px;width:21.5px;height:16px;background:#404040;box-sizing:border-box;border:1px solid #888"></div><div class="a" style="left:375.2px;top:567.2px;font:12.3px/14.76px 'Liberation Sans';color:#8a8a8a;letter-spacing:-0.3px;">Cor</div><div class="a" style="left:397px;top:565px;width:59px;height:16px;background:#404040;box-sizing:border-box;border:1px solid #888"></div><div class="a" style="left:398.4px;top:567.2px;font:12.3px/14.76px 'Liberation Sans';color:#8a8a8a;letter-spacing:-0.3px;">Ctrl</div><div class="a" style="left:424.8px;top:567.2px;font:12.3px/14.76px 'Liberation Sans';color:#8a8a8a;letter-spacing:-0.65px;">1.65V</div><div class="a" style="left:457px;top:565px;width:56.5px;height:16px;background:#3c3c8c;box-sizing:border-box;border:1px solid #8888b8"></div><div class="a" style="left:458.4px;top:567.2px;font:12.3px/14.76px 'Liberation Sans';color:#f0f0f0;letter-spacing:-0.3px;">Pow</div><div class="a" style="left:487.4px;top:567.2px;font:12.3px/14.76px 'Liberation Sans';color:#f0f0f0;letter-spacing:-0.3px;">3.3V</div><div class="a" style="left:515px;top:565px;width:49.5px;height:16px;background:#3c3c8c;box-sizing:border-box;border:1px solid #8888b8"></div><div class="a" style="left:516.6px;top:567.2px;font:12.3px/14.76px 'Liberation Sans';color:#f0f0f0;letter-spacing:-0.3px;">Attn 5dB</div><div class="a" style="left:566px;top:565px;width:44.5px;height:16px;background:#404040;box-sizing:border-box;border:1px solid #888"></div><div class="a" style="left:567.6px;top:567.2px;font:12.3px/14.76px 'Liberation Sans';color:#8a8a8a;letter-spacing:-0.3px;">ExtRef1</div><div class="a" style="left:612px;top:565px;width:44.5px;height:16px;background:#404040;box-sizing:border-box;border:1px solid #888"></div><div class="a" style="left:613.6px;top:567.2px;font:12.3px/14.76px 'Liberation Sans';color:#8a8a8a;letter-spacing:-0.3px;">ExtRef2</div><div class="a" style="left:658px;top:565px;width:27px;height:16px;background:#404040;box-sizing:border-box;border:1px solid #888"></div><div class="a" style="left:659.6px;top:567.2px;font:12.3px/14.76px 'Liberation Sans';color:#8a8a8a;letter-spacing:-0.3px;">Stop</div><div class="a" style="left:686.5px;top:565px;width:13.5px;height:16px;background:#404040;box-sizing:border-box;border:1px solid #888"></div><div class="a" style="left:688px;top:567.2px;font:12.3px/14.76px 'Liberation Sans';color:#8a8a8a;letter-spacing:-0.3px;">S</div></body></html>
